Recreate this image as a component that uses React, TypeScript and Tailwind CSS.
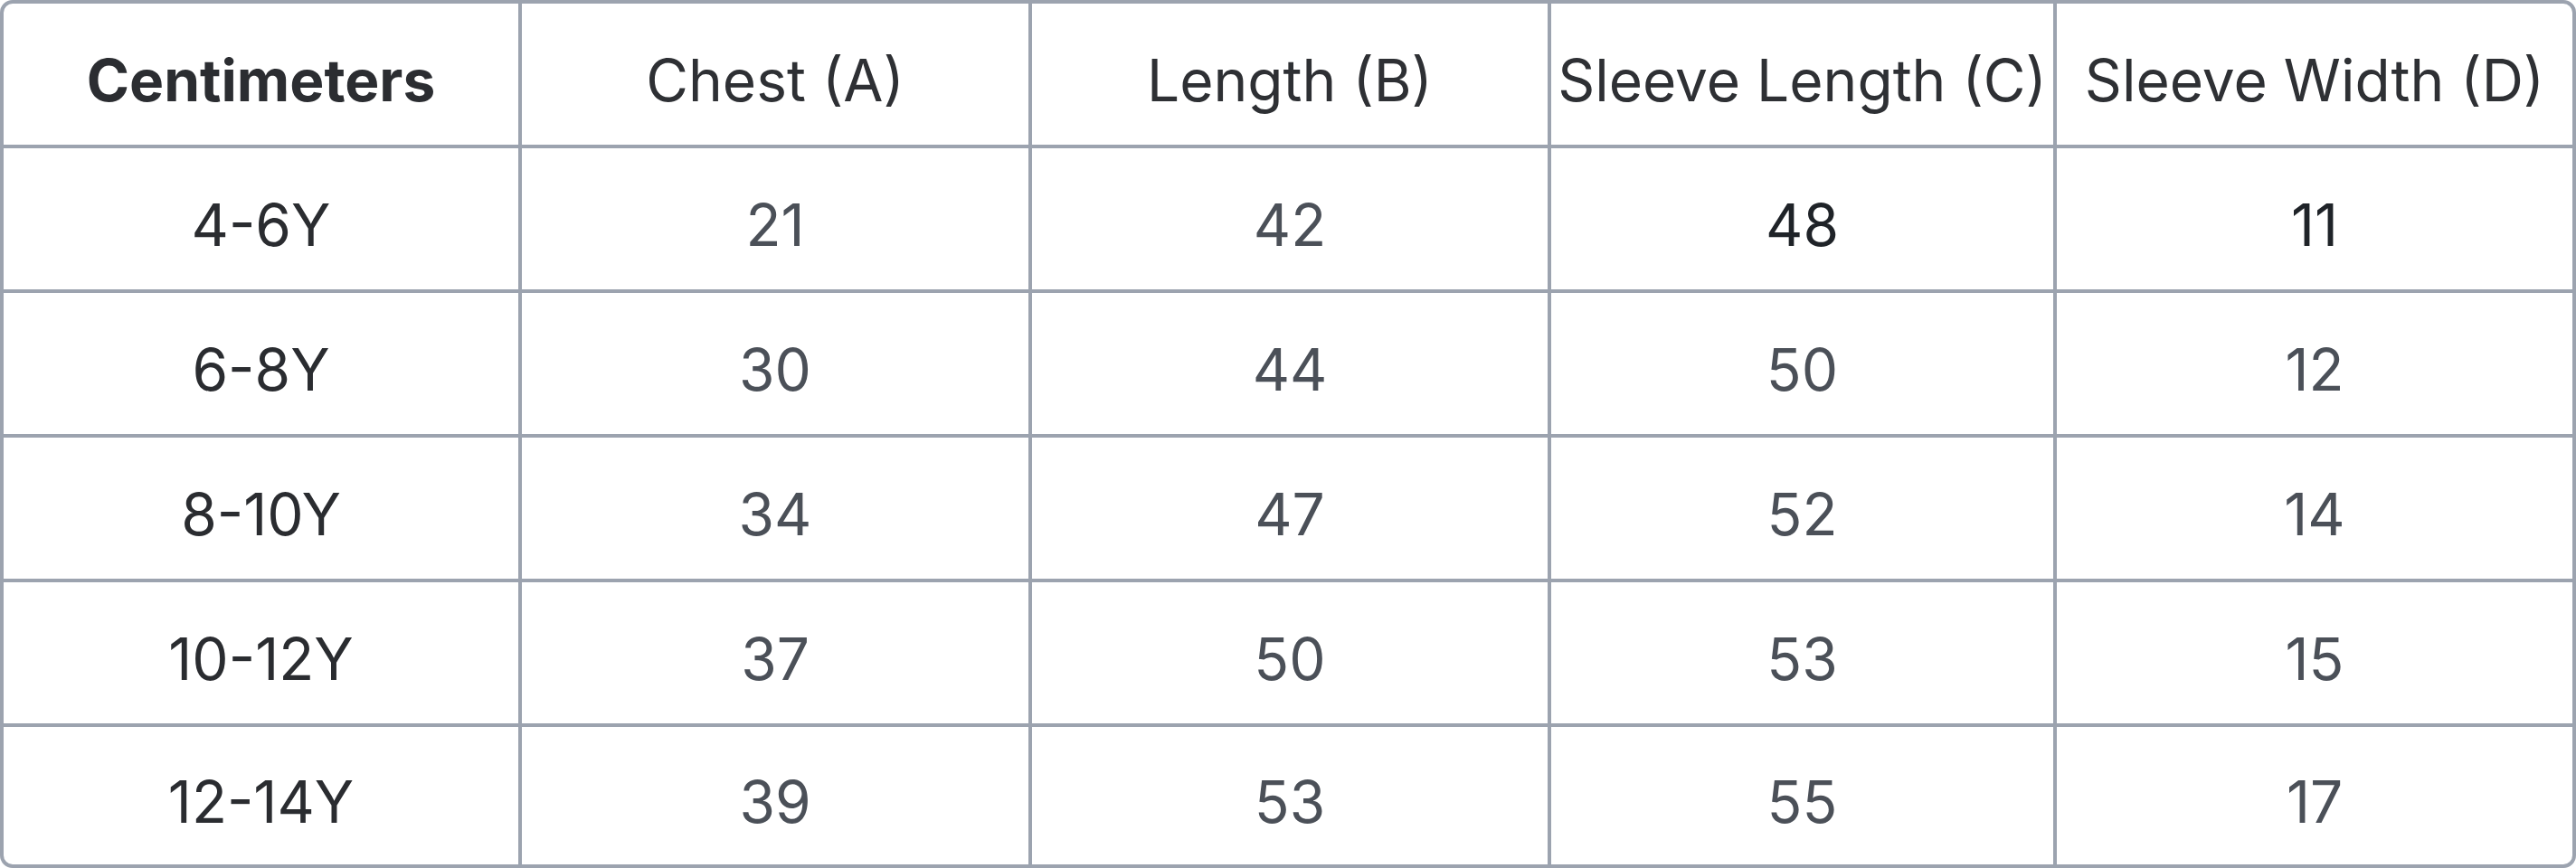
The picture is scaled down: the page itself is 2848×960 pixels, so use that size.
import React from "react";

const headers = ["Chest (A)", "Length (B)", "Sleeve Length (C)", "Sleeve Width (D)"];
const rows: { size: string; vals: string[]; dark?: boolean[] }[] = [
  { size: "4-6Y", vals: ["21", "42", "48", "11"], dark: [false, false, true, true] },
  { size: "6-8Y", vals: ["30", "44", "50", "12"] },
  { size: "8-10Y", vals: ["34", "47", "52", "14"] },
  { size: "10-12Y", vals: ["37", "50", "53", "15"] },
  { size: "12-14Y", vals: ["39", "53", "55", "17"] },
];

export default function App() {
  return (
    <div
      className="w-[2848px] h-[960px] bg-white"
      style={{ fontFamily: "Inter, 'Noto Sans', sans-serif" }}
    >
      <div className="w-full h-full border-4 border-[#9ca3af] rounded-[14px] overflow-hidden grid grid-cols-[573px_564px_574px_559px_570px] grid-rows-[160px_160px_160px_160px_160px_152px] text-[64px] leading-[1.5]">
        <div className="border-r-4 border-b-4 border-[#9ca3af] flex items-center justify-center pt-[13px] font-bold text-[#2b2d31]">
          Centimeters
        </div>
        {headers.map((h, i) => (
          <div
            key={h}
            className={
              i < headers.length - 1
                ? "border-r-4 border-b-4 border-[#9ca3af] flex items-center justify-center pt-[13px] text-[#2e3034] whitespace-nowrap"
                : "border-b-4 border-[#9ca3af] flex items-center justify-center pt-[13px] text-[#2e3034] whitespace-nowrap"
            }
          >
            {h}
          </div>
        ))}
        {rows.map((r, ri) => {
          const last = ri === rows.length - 1;
          return (
            <React.Fragment key={r.size}>
              <div
                className={
                  last
                    ? "border-r-4 border-[#9ca3af] flex items-center justify-center pt-[13px] text-[#2a2c30]"
                    : "border-r-4 border-b-4 border-[#9ca3af] flex items-center justify-center pt-[13px] text-[#2a2c30]"
                }
              >
                {r.size}
              </div>
              {r.vals.map((v, vi) => {
                const lastCol = vi === r.vals.length - 1;
                const dark = r.dark ? r.dark[vi] : false;
                let cls = "border-[#9ca3af] flex items-center justify-center pt-[13px] ";
                cls += lastCol ? "" : "border-r-4 ";
                cls += last ? "" : "border-b-4 ";
                cls += dark ? "text-[#1f2328]" : "text-[#4b5058]";
                return (
                  <div key={vi} className={cls}>
                    {v}
                  </div>
                );
              })}
            </React.Fragment>
          );
        })}
      </div>
    </div>
  );
}
